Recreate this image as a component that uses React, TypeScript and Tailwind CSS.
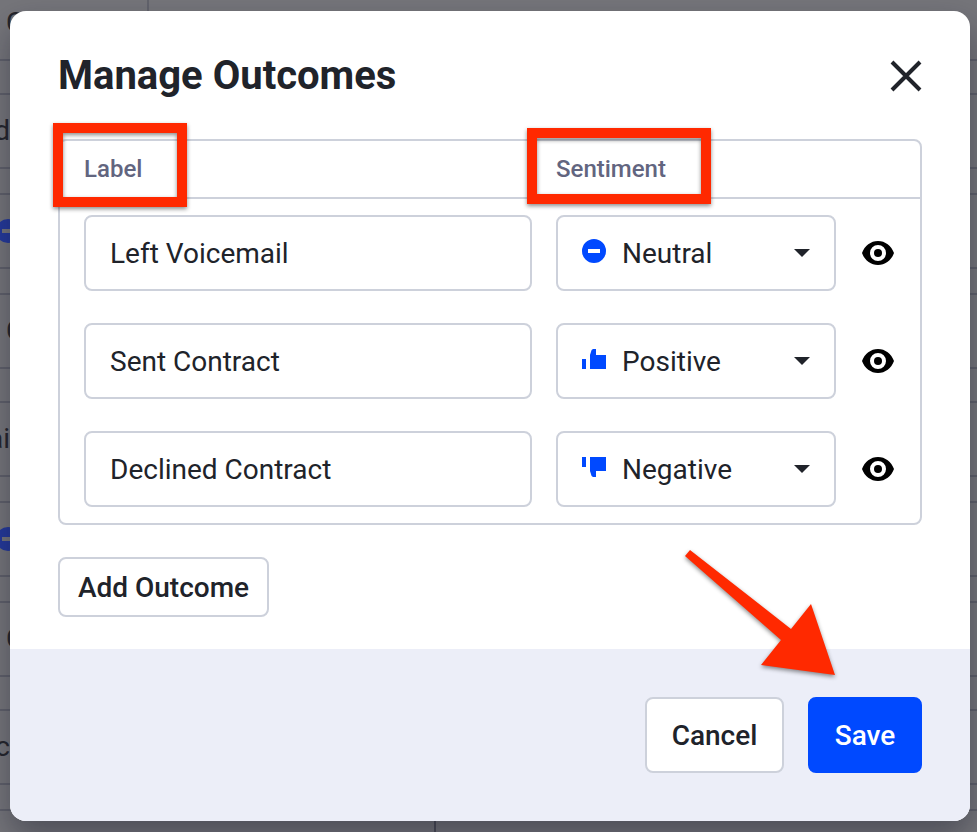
import { useState } from "react";

type Sentiment = "Neutral" | "Positive" | "Negative";

const initialOutcomes: { label: string; sentiment: Sentiment }[] = [
  { label: "Left Voicemail", sentiment: "Neutral" },
  { label: "Sent Contract", sentiment: "Positive" },
  { label: "Declined Contract", sentiment: "Negative" },
];

const SentimentIcon = ({ sentiment, className }: { sentiment: Sentiment; className?: string }) => (
  <svg viewBox="0 0 24 24" fill="#0049ff" className={className} aria-hidden="true">
    {sentiment === "Neutral" && (
      <path fillRule="evenodd" d="M12 0a12 12 0 1 1 0 24a12 12 0 0 1 0-24zM6 10v4h12v-4z" />
    )}
    {sentiment === "Positive" && <path d="M0 12h4v10H0zM8 22V8l1.6-5L11 2h3v6h10v14z" />}
    {sentiment === "Negative" && <path d="M0 2h4v10H0zM8 2v14l1.600 5L11 22h3v-6h10V2z" />}
  </svg>
);

const EyeIcon = () => (
  <svg viewBox="0 0 32 24" className="w-8 h-6" aria-hidden="true">
    <path
      fillRule="evenodd"
      d="M0 12C2.6 4.8 8.8 0 16 0s13.4 4.8 16 12c-2.6 7.2-8.8 12-16 12S2.6 19.2 0 12zM16 4a8 8 0 1 0 0 16a8 8 0 0 0 0-16z"
    />
    <circle cx="16" cy="12" r="4" />
  </svg>
);

const Highlight = ({ className }: { className: string }) => (
  <span
    className={`absolute border-[10px] border-[#ff2900] drop-shadow-[0_2px_2px_rgba(0,0,0,0.45)] pointer-events-none ${className}`}
  />
);

// The outcomes table dimmed behind the dialog
const PageBehind = () => (
  <div className="absolute inset-0 overflow-hidden bg-[#75757a] text-[28px] leading-9 text-[#24252b]" aria-hidden="true">
    <div className="absolute left-[147px] top-0 h-4 w-[2px] bg-[#62636c]" />
    <div className="absolute left-[434px] bottom-0 h-4 w-[2px] bg-[#4b4c56]" />
    <div className="-mt-4 flex flex-col gap-8">
      <div className="h-[77px] border-y-2 border-[#5f606a] flex items-center pl-[6px]">C</div>
      {["d", "ai", "c"].map((text) => (
        <div key={text} className="flex flex-col gap-6">
          <div className="h-[76px] border-y-2 border-[#5f606a] flex items-center">
            <span className="w-[10px] flex justify-end whitespace-nowrap">{text}</span>
          </div>
          <div className="h-[76px] border-y-2 border-[#5f606a] flex items-center">
            <svg viewBox="0 0 24 24" className="-ml-1 w-6 h-6" fill="#24399b">
              <path fillRule="evenodd" d="M12 0a12 12 0 1 1 0 24a12 12 0 0 1 0-24zM6 10v4h12v-4z" />
            </svg>
          </div>
          <div className="h-[76px] border-y-2 border-[#5f606a] flex items-center pl-[6px]">C</div>
        </div>
      ))}
    </div>
  </div>
);

const App = () => {
  const [outcomes, setOutcomes] = useState(initialOutcomes);

  const update = (index: number, change: Partial<(typeof initialOutcomes)[number]>) =>
    setOutcomes(outcomes.map((o, i) => (i === index ? { ...o, ...change } : o)));

  return (
    <div className="relative min-h-screen overflow-hidden pl-[10px] pr-[7px] py-[11px] font-['Roboto','Noto_Sans',sans-serif] text-[#20232a]">
      <PageBehind />
      <div
        role="dialog"
        aria-labelledby="dialog-title"
        className="relative rounded-2xl bg-white shadow-[0_16px_32px_rgba(20,22,40,0.4)]"
      >
        <div className="px-12 pt-10 pb-8">
          <div className="flex items-center justify-between mb-[38px]">
            <h1 id="dialog-title" className="text-[40px] leading-[50px] font-bold">
              Manage Outcomes
            </h1>
            <button type="button" aria-label="Close">
              <svg viewBox="0 0 32 32" className="w-8 h-8" stroke="currentColor" strokeWidth="4">
                <path d="M2 2l28 28M30 2L2 30" />
              </svg>
            </button>
          </div>

          <div className="border-2 border-[#cdd1db] rounded-lg">
            <table className="w-full table-fixed border-separate border-spacing-0">
              <colgroup>
                <col />
                <col className="w-[280px]" />
                <col className="w-[84px]" />
              </colgroup>
              <thead>
                <tr className="h-[58px] text-left text-2xl text-[#62657f]">
                  <th className="relative p-0 pl-6 border-b-2 border-[#cdd1db] font-medium">
                    Label
                    <Highlight className="-left-[7px] -top-[18px] w-[134px] h-[84px]" />
                  </th>
                  <th className="relative p-0 border-b-2 border-[#cdd1db] font-medium">
                    Sentiment
                    <Highlight className="-left-[29px] -top-[13px] w-[184px] h-[76px]" />
                  </th>
                  <th className="p-0 border-b-2 border-[#cdd1db]" />
                </tr>
              </thead>
              <tbody>
                {outcomes.map((outcome, index) => (
                  <tr key={index} className="h-[108px] text-[28px]">
                    <td className="p-0 px-6">
                      <input
                        type="text"
                        aria-label="Label"
                        value={outcome.label}
                        onChange={(e) => update(index, { label: e.target.value })}
                        className="block w-full h-[76px] px-6 border-2 border-[#cdd1db] rounded-lg"
                      />
                    </td>
                    <td className="p-0">
                      <div className="relative">
                        <select
                          aria-label="Sentiment"
                          value={outcome.sentiment}
                          onChange={(e) => update(index, { sentiment: e.target.value as Sentiment })}
                          className="block w-full h-[76px] pl-16 pr-12 pt-[2px] appearance-none border-2 border-[#cdd1db] rounded-lg bg-white"
                        >
                          <option>Neutral</option>
                          <option>Positive</option>
                          <option>Negative</option>
                        </select>
                        <SentimentIcon
                          sentiment={outcome.sentiment}
                          className="absolute left-[26px] top-6 w-6 h-6 pointer-events-none"
                        />
                        <svg
                          viewBox="0 0 16 8"
                          className="absolute right-[26px] top-[34px] w-4 h-2 pointer-events-none"
                          fill="currentColor"
                          aria-hidden="true"
                        >
                          <path d="M0 0h16L8 8z" />
                        </svg>
                      </div>
                    </td>
                    <td className="p-0">
                      <button type="button" aria-label="Toggle visibility" className="block mx-auto text-black">
                        <EyeIcon />
                      </button>
                    </td>
                  </tr>
                ))}
              </tbody>
            </table>
          </div>

          <button
            type="button"
            className="mt-8 h-[60px] min-w-[211px] px-4 pt-[2px] border-2 border-[#cdd1db] rounded-lg text-[28px] font-medium"
            onClick={() => setOutcomes([...outcomes, { label: "", sentiment: "Neutral" }])}
          >
            Add Outcome
          </button>
        </div>

        <div className="relative flex justify-end gap-6 p-12 rounded-b-2xl bg-[#eceef8] text-[28px] font-medium">
          <button
            type="button"
            className="h-[76px] min-w-[139px] px-6 pt-[2px] border-2 border-[#cdd1db] rounded-lg bg-white"
          >
            Cancel
          </button>
          <button
            type="button"
            className="h-[76px] min-w-[114px] px-6 pt-[2px] border-2 border-[#0049ff] rounded-lg bg-[#0049ff] text-white"
          >
            Save
          </button>
          <svg
            viewBox="0 0 152 128"
            className="absolute right-[134px] bottom-36 w-[152px] h-32 overflow-visible drop-shadow-[0_2px_2px_rgba(0,0,0,0.45)] pointer-events-none"
            fill="#ff2900"
            aria-hidden="true"
          >
            <path d="M1 7L6 1L107 80L127 55L151 126L77 116L97 91z" />
          </svg>
        </div>
      </div>
    </div>
  );
};

export default App;
